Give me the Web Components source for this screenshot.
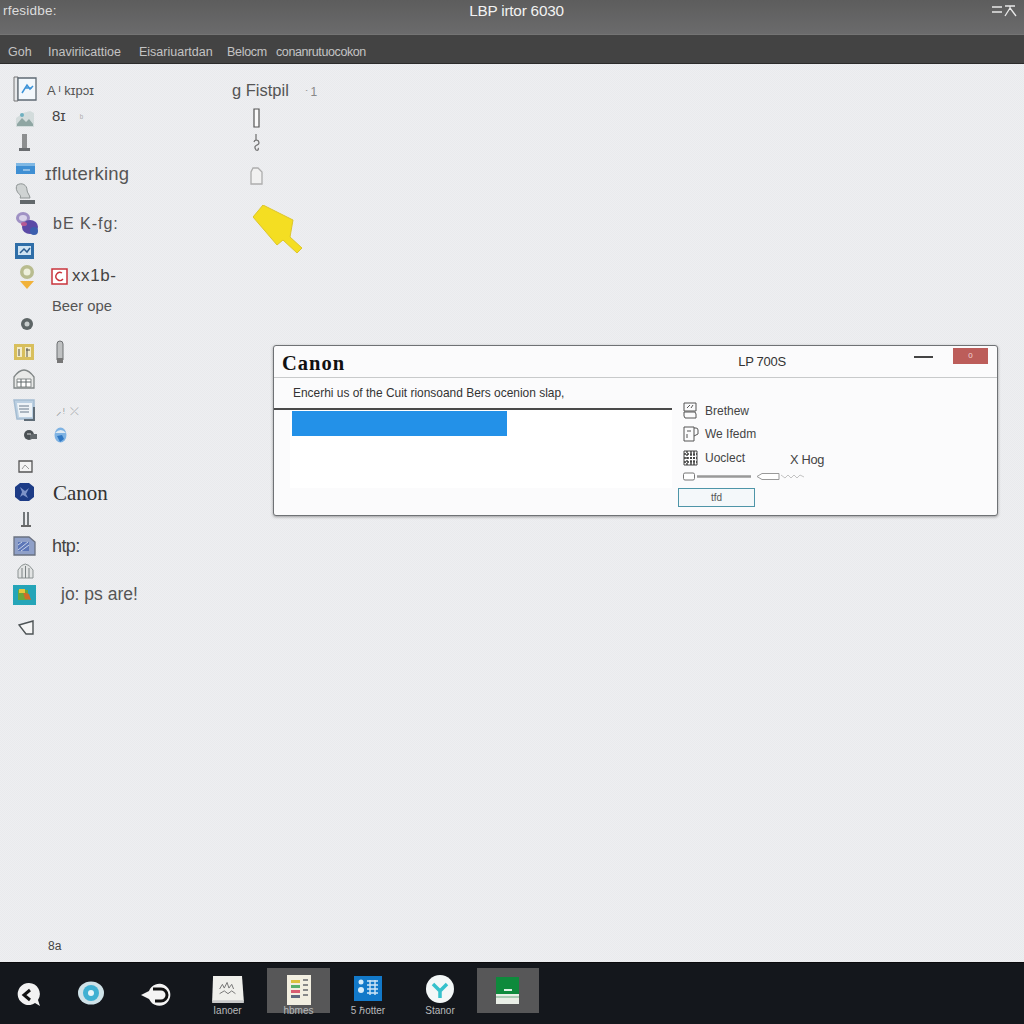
<!DOCTYPE html>
<html lang="en"><head><meta charset="utf-8"><title>LBP irtor 6030</title>
<style>
html,body{margin:0;padding:0;height:100%}
body{font-family:"Liberation Sans",Arial,sans-serif;overflow:hidden}
svg{display:block;filter:blur(.3px)}
</style></head><body>
<app-shell>
  <title-bar slot="title">
    <span slot="left">rfesidbe:</span>
    <span slot="center">LBP irtor 6030</span>
    <svg slot="right" width="26" height="14" viewBox="0 0 26 14" fill="none" stroke="#e8e8e8" stroke-width="1.3"><path d="M1 4h10M1 9h10M14 3h10M19 3v2l-5 8M19 5l6 8"/></svg>
  </title-bar>
  <menu-bar>
    <span style="width:40px">Goh</span><span style="width:91px">Inaviriicattioe</span><span style="width:88px">Eisariuartdan</span><span style="width:49px;letter-spacing:-.3px">Belocm</span><span style="letter-spacing:-.4px">conanrutuocokon</span>
  </menu-bar>
  <desk-top slot="desk">
    <side-bar>
      <side-row h="26" ><svg slot="icon" width="24" height="26" viewBox="0 0 24 26"><path d="M1 1h4v24H1z" fill="#e6e8ea" stroke="#777"/><path d="M5 2h18v22H5z" fill="#f3f8fc" stroke="#5f6a73" stroke-width="1.3"/><path d="M9 17l5-8 3 4 3-3M12 12h7" fill="none" stroke="#3c93d8" stroke-width="1.5"/></svg><span style="margin:3px 0 0 -5px;font-size:13px;color:#555">A ᴵ kɪpɔɪ</span></side-row>
      <side-row h="28"><svg slot="icon" width="20" height="18" viewBox="0 0 20 18" style="margin-top:6px"><path d="M1 8l7-5 7-2 4 2v14H1z" fill="#d3dcdc"/><path d="M2 14l5-6 4 4 3-3 4 5v2H2z" fill="#8fa6a3"/><circle cx="7" cy="5" r="2" fill="#6fb0c0"/></svg><span style="font-size:15px;color:#444;margin-top:-2px">8ɪ<span style="color:#aaa;font-size:9px;margin-left:14px">ᵇ</span></span></side-row>
      <side-row h="26"><svg slot="icon" width="12" height="18" viewBox="0 0 12 18"><path d="M3 0h5v14H3z" fill="#8d8f90"/><path d="M0 14h11v3H0z" fill="#6a6d70"/></svg></side-row>
      <side-row h="26"><svg slot="icon" width="21" height="13" viewBox="0 0 21 13" style="margin-top:-2px"><path d="M1 1h19v11H1z" fill="#3f8fd3"/><path d="M1 1h19v3H1z" fill="#7fb8e4"/><path d="M8 8h7" stroke="#dcebf7"/></svg><span style="font-size:18.5px;color:#555;margin:10px 0 0 -7px;letter-spacing:.25px;white-space:nowrap">ɪfluterking</span></side-row>
      <side-row h="24"><svg slot="icon" width="22" height="22" viewBox="0 0 22 22"><path d="M3 2c5-3 10 0 10 5 0 3 3 5 3 8H6c2-3-2-4-3-7-1-2-1-4 0-6z" fill="#cfd3d3" stroke="#8e9494"/><path d="M6 17h15v4H6z" fill="#62686b"/></svg></side-row>
      <side-row h="34"><svg slot="icon" width="24" height="26" viewBox="0 0 24 26" style="margin-left:4px"><ellipse cx="8" cy="8" rx="7" ry="6" fill="#9f91c4"/><ellipse cx="8" cy="8" rx="4" ry="3" fill="#d9d3ea"/><ellipse cx="15" cy="17" rx="8" ry="7" fill="#5b4aa6"/><ellipse cx="19" cy="21" rx="4" ry="4" fill="#3b5fae"/><ellipse cx="9" cy="14" rx="3" ry="2" fill="#b65a94"/></svg><span style="font-size:16px;color:#555;letter-spacing:1px;margin:2px 0 0 1px">bE K-fg:</span></side-row>
      <side-row h="22"><svg slot="icon" width="19" height="16" viewBox="0 0 19 16" style="margin-left:-2px"><path d="M0 0h19v16H0z" fill="#2f6ea8"/><path d="M3 3h13v9H3z" fill="#cfe3f2"/><path d="M5 10l4-4 3 3 3-4" fill="none" stroke="#2b5d8f" stroke-width="1.5"/></svg></side-row>
      <side-row h="30"><svg slot="icon" width="18" height="26" viewBox="0 0 18 26" style="margin-left:4px"><circle cx="9" cy="8" r="7" fill="#b8bc8f"/><circle cx="9" cy="8" r="3.5" fill="#eef0dc"/><path d="M2 17h14l-7 8z" fill="#f1b23a"/></svg><svg width="17" height="17" viewBox="0 0 17 17" style="margin:-2px 0 0 -1px"><path d="M1 1h15v15H1z" fill="#fff" stroke="#c9343c" stroke-width="1.5"/><path d="M11 5a4 4 0 1 0 1 6" fill="none" stroke="#c9343c" stroke-width="1.4"/></svg><span style="font-size:17px;color:#444;margin:-2px 0 0 4px;letter-spacing:.6px">xx1b-</span></side-row>
      <side-row h="24"><span style="font-size:14.800px;color:#555;white-space:nowrap;margin:4px 0 0 0">Beer ope</span></side-row>
      <side-row h="16" ><svg slot="icon" width="14" height="14" viewBox="0 0 14 14" style="margin-left:4px"><circle cx="7" cy="7" r="6" fill="#5d6566"/><circle cx="7" cy="7" r="2.5" fill="#c7cccc"/></svg></side-row>
      <side-row h="28" style="margin-top:6px"><svg slot="icon" width="20" height="16" viewBox="0 0 20 16" style="margin-left:-2px"><path d="M0 0h20v16H0z" fill="#d8bf5c"/><path d="M3 3h5v10H3zM11 3h6v10h-6z" fill="#f3ecc7"/><path d="M5 5v7M13 4v9M16 6h-4" stroke="#55524a"/></svg><svg width="8" height="24" viewBox="0 0 8 24" style="margin-left:4px"><path d="M1 4a3 3 0 0 1 6 0v16H1z" fill="#bfc1c2" stroke="#6d7072"/><path d="M1 18h6v5H1z" fill="#777"/></svg></side-row>
      <side-row h="26"><svg slot="icon" width="22" height="20" viewBox="0 0 22 20" style="margin-left:-2px"><path d="M1 8q10-14 20 0v11H1z" fill="#e8e9e8" stroke="#808686" stroke-width="1.3"/><path d="M4 10h14v8H4z" fill="#fff" stroke="#868b8b"/><path d="M8 10v8M13 10v8M4 13h14" stroke="#60686a"/></svg></side-row>
      <side-row h="36"><svg slot="icon" width="24" height="24" viewBox="0 0 24 24" style="margin-left:-2px"><path d="M2 2h20v19H5z" fill="#bcd0e2" stroke="#a5bdd2" stroke-width="1.5"/><path d="M5 5h15v14H7z" fill="#eef3f7"/><path d="M7 8h10M7 11h10M8 14h9" stroke="#687a8c" stroke-width="1.2"/><path d="M22 9v13H12" fill="none" stroke="#5f6c77" stroke-width="2"/></svg><span style="font-size:11px;color:#8a8f92;margin-left:4px;letter-spacing:1px">⸝ᵎ ⤫</span></side-row>
      <side-row h="14"><svg slot="icon" width="13" height="10" viewBox="0 0 13 10" style="margin-left:10px"><ellipse cx="5" cy="5" rx="5" ry="5" fill="#4a5054"/><path d="M6 4h7v5H6z" fill="#62686c"/><path d="M3 4h4" stroke="#ddd"/></svg><svg width="13" height="16" viewBox="0 0 13 16" style="margin-left:2px"><ellipse cx="6.5" cy="8" rx="6" ry="7.5" fill="#7fb3e3"/><path d="M1 6q6-6 11 0" fill="#dfeaf3"/><path d="M3 9l5-1 2 4-4 3z" fill="#2f78c4"/></svg></side-row>
      <side-row h="26" style="margin-top:11px"><svg slot="icon" width="15" height="13" viewBox="0 0 15 13"><path d="M1 1h13v11H1z" fill="#f3f3f3" stroke="#555" stroke-width="1.3"/><path d="M4 9l3-4 4 4" fill="none" stroke="#999"/></svg></side-row>
      <side-row h="26"><svg slot="icon" width="21" height="20" viewBox="0 0 21 20" style="margin-left:-2px"><path d="M1 5l5-4h9l5 4 0 10-5 4H6l-5-4z" fill="#1d3c86"/><path d="M6 5l5 4 4-3-3 6 2 4-5-3-3 2 2-5z" fill="#7d93c8"/></svg><span style="font-family:'Liberation Serif',serif;font-size:21px;color:#333;margin:3px 0 0 1px">Canon</span></side-row>
      <side-row h="28"><svg slot="icon" width="12" height="15" viewBox="0 0 12 15" style="margin-left:4px"><path d="M2 0h2v13H2zM6 0h2v13H6z" fill="#72777a"/><path d="M0 13h10v2H0z" fill="#666"/></svg></side-row>
      <side-row h="26"><svg slot="icon" width="23" height="20" viewBox="0 0 23 20" style="margin-left:-1px"><path d="M1 1h15l6 5v13H1z" fill="#8fa0c8" stroke="#6a7180" stroke-width="1.3"/><path d="M5 6h11v9H5z" fill="#5d77b8"/><path d="M5 14L15 6M8 15l8-6M5 9l4-3" stroke="#c9d5ea"/></svg><span style="font-size:18px;color:#444;letter-spacing:-.6px">htp:</span></side-row>
      <side-row h="22"><svg slot="icon" width="17" height="17" viewBox="0 0 17 17"><path d="M1 8q7-12 15 0v8H1z" fill="#e2e4e4" stroke="#8b9292"/><path d="M5 6v10M8.500 4v12M12 6v10" stroke="#7a8183"/></svg></side-row>
      <side-row h="26"><svg slot="icon" width="23" height="21" viewBox="0 0 23 21" style="margin-left:-2px"><path d="M0 1h23v20H0z" fill="#25a5b8"/><path d="M5 6h10v10H5z" fill="#6aa83c"/><path d="M10 8l6 2 2 6-6-1z" fill="#d06c28"/><path d="M6 5h6v4H6z" fill="#e7c53b"/></svg><span style="font-size:17.500px;color:#555;margin-left:9px;white-space:nowrap">jo: ps are!</span></side-row>
      <side-row h="40"><svg slot="icon" width="17" height="15" viewBox="0 0 17 15" style="margin-left:2px"><path d="M1 5l14-4v13H8z" fill="#f5f5f5" stroke="#4e5456" stroke-width="1.4"/></svg></side-row>
      <span class="foot" style="margin-top:auto;margin-left:48px;margin-bottom:9px;font-size:12px;color:#444">8a</span>
    </side-bar>
    <tool-col>
      <span style="font-size:16.500px;color:#555;white-space:nowrap;margin-left:0">g Fistpil <span style="color:#888;font-size:12px;margin-left:10px">᛫1</span></span>
      <svg width="7" height="20" viewBox="0 0 7 20" style="margin:8px 0 0 21px"><path d="M1 1h5v18H1z" fill="#fafafa" stroke="#555" stroke-width="1.2"/></svg>
      <svg width="7" height="18" viewBox="0 0 7 18" style="margin:6px 0 0 21px"><path d="M3 0v6M1 8a2.500 2.500 0 1 1 3 3c-2 1-3 2-1 5 2 1 3-1 2-2" fill="none" stroke="#777" stroke-width="1.3"/></svg>
      <svg width="13" height="18" viewBox="0 0 13 18" style="margin:15px 0 0 18px"><path d="M3 1h5l4 4v12H1V5z" fill="#f1f1f1" stroke="#adadad" stroke-width="1.3"/></svg>
      <svg width="50" height="50" viewBox="0 0 50 50" style="margin:20px 0 0 21px"><path d="M10 0l30 15-3 17 12 11-5 5-14-13-6 5L0 12z" fill="#f4de22" stroke="#dcc52c"/></svg>
    </tool-col>
    <desk-window>
      <span slot="brand">Canon</span>
      <span slot="model">LP 700S</span>
      <span slot="message">Encerhi us of the Cuit rionsoand Bers ocenion slap,</span>
      <list-row><svg slot="icon" width="14" height="17" viewBox="0 0 14 17" fill="none" stroke="#555"><path d="M1 1h12v8H1zM1 10h11l1 2v4H2l-1-2zM4 6l3-3M8 6l2-3"/></svg>Brethew</list-row>
      <list-row><svg slot="icon" width="16" height="17" viewBox="0 0 16 17" fill="none" stroke="#555"><path d="M1 1h10v14H1zM11 2h2a2 2 0 0 1 2 2v4l-4 2M4 5h4M4 8v4"/></svg>We Ifedm</list-row>
      <list-row extra="X Hog"><svg slot="icon" width="15" height="16" viewBox="0 0 15 16"><path d="M1 1h13v14H1z" fill="#fff" stroke="#444"/><path d="M1 4h13M1 8h13M1 12h13M4 1v14M8 1v14M11 1v14" stroke="#333" stroke-width="1.3" stroke-dasharray="2 1"/></svg>Uoclect</list-row>
      <svg slot="slider" width="126" height="9" viewBox="0 0 126 9" fill="none"><rect x=".5" y="1" width="11" height="7" rx="1.500" fill="#fff" stroke="#777"/><path d="M14 4.500h54" stroke="#999" stroke-width="2.500"/><path d="M74 4.500l5-3h17v6H79z" fill="#fff" stroke="#999"/><path d="M98 3l4 3 3-3 3 3 3-3 3 3 3-3 4 2" stroke="#c3c3c3"/></svg>
      <span slot="button">tfd</span>
    </desk-window>
  </desk-top>
  <task-bar slot="task">
    <task-item w="58" low><svg slot="icon" width="28" height="28" viewBox="0 0 28 28"><path d="M14 2a11 11 0 1 0 6 20l5 3-2-6A11 11 0 0 0 14 2z" fill="#f2f2f2"/><path d="M15 9l-6 5 6 5" fill="none" stroke="#111" stroke-width="3"/></svg></task-item>
    <task-item w="66" low><svg slot="icon" width="26" height="24" viewBox="0 0 26 24"><ellipse cx="13" cy="12" rx="13" ry="11.500" fill="#cfe2e8"/><circle cx="13" cy="12" r="8" fill="#3fb0d2"/><circle cx="13" cy="12" r="3" fill="#e7f4f8"/></svg></task-item>
    <task-item w="64" low><svg slot="icon" width="32" height="28" viewBox="0 0 32 28"><path d="M1 14l8-4a11 11 0 1 1 2 11l-2-3z" fill="#f4f4f4"/><path d="M13 8h8a6 6 0 0 1 0 12h-6" fill="none" stroke="#111" stroke-width="3"/></svg></task-item>
    <task-item w="79" label="Ianoer"><svg slot="icon" width="36" height="28" viewBox="0 0 36 30"><path d="M2 1h31l2 27H1z" fill="#efefeb"/><path d="M9 15l3-5 2 4 3-6 2 6 3-4 2 5M9 20l5-3 4 3 4-3 4 3" fill="none" stroke="#707070"/><path d="M1 27h34v3H1z" fill="#c9c9c9"/></svg></task-item>
    <task-item w="63" active label="hbmes"><svg slot="icon" width="28" height="30" viewBox="0 0 28 30"><path d="M2 0h24v30H2z" fill="#f2eee0"/><path d="M6 5h9v3H6z" fill="#dcc23c"/><path d="M6 10h9v3H6z" fill="#59b06a"/><path d="M6 15h9v3H6z" fill="#d85c72"/><path d="M6 20h9v3H6z" fill="#606880"/><path d="M18 5h5M18 10h5M18 15h5M18 20h5" stroke="#888" stroke-width="2"/></svg></task-item>
    <task-item w="76" label="5 ℏotter"><svg slot="icon" width="28" height="25" viewBox="0 0 28 25" style="margin-top:1px"><path d="M0 0h28v25H0z" fill="#1279c9"/><circle cx="7" cy="6" r="2.500" fill="#d7ecfa"/><circle cx="7" cy="14" r="3" fill="#d7ecfa"/><path d="M13 5h11M13 9h11M13 13h11M13 17h11M16 4v15M21 4v15" stroke="#cfe6f7" stroke-width="1.400"/></svg></task-item>
    <task-item w="68" label="Stanor"><svg slot="icon" width="28" height="28" viewBox="0 0 28 28"><circle cx="14" cy="14" r="14" fill="#f3f7f7"/><path d="M7 9l7 7 7-7M14 15v8" fill="none" stroke="#35c1cc" stroke-width="3.500"/></svg></task-item>
    <task-item w="62" active style="margin-left:3px"><svg slot="icon" width="24" height="28" viewBox="0 0 24 28" style="margin-top:2px"><path d="M0 0h23v19H0z" fill="#0e8a3c"/><path d="M8 12h8v2H8z" fill="#dff2e5"/><path d="M0 17h23v10H0z" fill="#e9eee6"/><path d="M0 20h23" stroke="#67a87e"/></svg></task-item>
  </task-bar>
</app-shell>
<script>
function def(name, css, html){
  customElements.define(name, class extends HTMLElement{
    constructor(){super();const r=this.attachShadow({mode:'open'});r.innerHTML='<style>'+css+'</style>'+html;}
    connectedCallback(){
      const r=this.shadowRoot;
      if(name==='side-row'){this.style.height=this.getAttribute('h')+'px';}
      if(name==='task-item'){
        this.style.width=this.getAttribute('w')+'px';
        r.querySelector('.l').textContent=this.getAttribute('label')||'';
        if(this.hasAttribute('active'))this.classList.add('on');
        if(this.hasAttribute('low'))this.classList.add('low');
      }
      if(name==='list-row'){r.querySelector('.x').textContent=this.getAttribute('extra')||'';}
    }
  });
}
def('app-shell',':host{display:flex;flex-direction:column;width:1024px;height:1024px;overflow:hidden}','<slot name="title"></slot><slot></slot><slot name="desk"></slot><slot name="task"></slot>');
def('title-bar',':host{display:grid;grid-template-columns:1fr auto 1fr;height:35px;flex:none;background:linear-gradient(#5d5d5d,#6b6b6c);color:#eee;padding:0 7px 0 3px;box-sizing:border-box;border-bottom:1px solid #747474}.l{font-size:13.500px;color:#ddd;padding-top:3px;letter-spacing:.2px}.c{font-size:15.300px;padding:2px 0 0 13px;color:#f2f2f2;letter-spacing:-.2px}.r{justify-self:end;padding-top:3px}','<div class="l"><slot name="left"></slot></div><div class="c"><slot name="center"></slot></div><div class="r"><slot name="right"></slot></div>');
def('menu-bar',':host{display:flex;align-items:center;height:29px;flex:none;background:#434343;color:#c4c4c4;font-size:12.500px;padding:5px 0 0 8px;box-sizing:border-box;white-space:nowrap;border-bottom:1px solid #2c2c2c}::slotted(span){display:block;white-space:nowrap}','<slot></slot>');
def('desk-top',':host{display:flex;flex:1;position:relative;min-height:0;background:repeating-conic-gradient(#eeeff1 0 25%,#e9eaed 0 50%) 0 0/2px 2px}','<slot></slot>');
def('side-bar',':host{display:flex;flex-direction:column;width:232px;flex:none;padding-top:12px;box-sizing:border-box;height:898px}','<slot></slot>');
def('side-row',':host{display:flex;align-items:center;flex:none}.i{display:flex;justify-content:center;align-items:center;width:50px;flex:none}.t{display:flex;align-items:center;margin-left:2px;white-space:nowrap}','<div class="i"><slot name="icon"></slot></div><div class="t"><slot></slot></div>');
def('tool-col',':host{display:flex;flex-direction:column;padding-top:17px;box-sizing:border-box;width:100px}','<slot></slot>');
def('desk-window',`:host{position:absolute;left:273px;top:281px;width:725px;height:171px;box-sizing:border-box;background:#fbfbfc;border:1.5px solid #6f7275;border-radius:3px;box-shadow:0 1px 3px rgba(0,0,0,.35);display:flex;flex-direction:column;color:#333}
.head{display:grid;grid-template-columns:1fr auto 1fr;height:31px;align-items:center;border-bottom:1.500px solid #c8cacb;padding:0 9px 0 8px;flex:none}
.brand{font:bold 20.500px "Liberation Serif",serif;color:#111;letter-spacing:1px;padding-top:4px}
.model{font-size:13px;color:#333;padding-left:254px;letter-spacing:-.3px}
.ctl{display:flex;justify-content:flex-end;align-items:flex-start;gap:20px;align-self:start;padding-top:2px}
.min{width:19px;height:1.500px;background:#444;margin-top:8px}
.close{width:35px;height:16px;background:#bc5d5a;color:#f2d6d4;font-size:8px;line-height:15px;text-align:center}
.msg{height:30px;line-height:30px;font-size:11.950px;color:#333;padding-left:19px;flex:none;box-sizing:border-box;white-space:nowrap}
.body{display:flex;flex:1;min-height:0}
.left{width:398px;flex:none;border-top:2px solid #4a4a4a;padding-left:16px;box-sizing:border-box;height:81px}
.pane{background:#fff;height:78px;padding-left:2px;padding-top:1px;box-sizing:border-box}
.bar{width:215px;height:25px;background:#2391e8}
.right{padding:0 0 0 11px;display:flex;flex-direction:column;margin-top:-9px}
.btn{display:flex;align-items:center;justify-content:center;width:77px;height:19px;border:1.500px solid #4e95a8;background:#f4f8fa;box-sizing:border-box;font-size:10px;color:#555;margin:5.500px 0 0 -5px}
.sl{height:12px;margin-top:1px;display:flex;align-items:center}`,
`<div class="head"><div class="brand"><slot name="brand"></slot></div><div class="model"><slot name="model"></slot></div><div class="ctl"><div class="min"></div><div class="close">0</div></div></div>
<div class="msg"><slot name="message"></slot></div>
<div class="body"><div class="left"><div class="pane"><div class="bar"></div></div></div><div class="right"><slot></slot><div class="sl"><slot name="slider"></slot></div><div class="btn"><slot name="button"></slot></div></div></div>`);
def('list-row',':host{display:flex;align-items:center;height:23.500px;font-size:12px;color:#444;white-space:nowrap;position:relative}.i{width:22px;flex:none}.x{position:absolute;left:107px;top:6px;font-size:12.800px;letter-spacing:-.3px}','<div class="i"><slot name="icon"></slot></div><slot></slot><span class="x"></span>');
def('task-bar',':host{display:flex;height:62px;flex:none;background:#14171c;box-sizing:border-box;border-top:1px solid #0a0a0c}','<slot></slot>');
def('task-item',':host{display:flex;flex-direction:column;align-items:center;flex:none;box-sizing:border-box;padding-top:12px;height:100%}:host(.low){padding-top:18px}:host(.on){background:#575758;height:45px;margin-top:5px;padding-top:7px}.i{height:30px;flex:none}.l{font-size:10px;color:#b8babb;white-space:nowrap;line-height:12px}','<div class="i"><slot name="icon"></slot></div><span class="l"></span>');
</script>
</body></html>
